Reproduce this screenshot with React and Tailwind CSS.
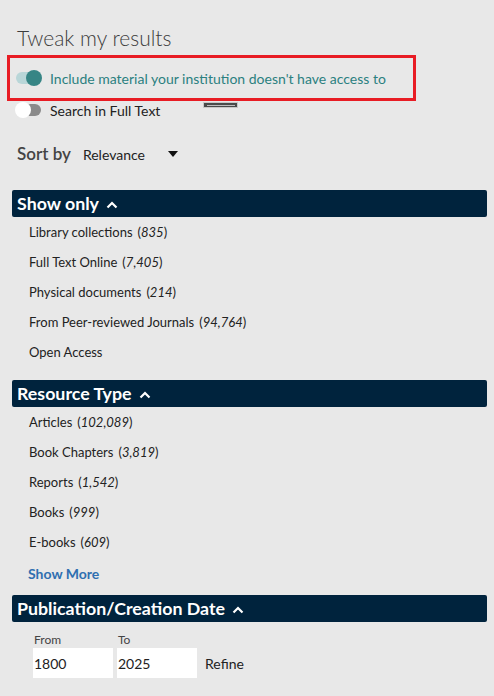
import React from 'react';

const font = { fontFamily: 'Lato, "Open Sans", sans-serif' };

function Toggle({ on }) {
  return (
    <span className="relative inline-flex h-[14px] w-[26px] items-center shrink-0">
      <span className={`h-[12px] w-[25px] rounded-full ${on ? 'bg-[#b9d6d8]' : 'bg-[#8a8a8a]'}`} />
      <span
        className={`absolute top-[-1px] h-[16px] w-[16px] rounded-full ${
          on ? 'left-[10px] bg-[#368585]' : 'left-[-1px] bg-white'
        }`}
      />
    </span>
  );
}

function Chevron() {
  return (
    <svg width="12" height="8" viewBox="0 0 12 8" className="ml-[7px] mt-[2px]">
      <path d="M1.5 6.5 L6 2 L10.5 6.5" fill="none" stroke="white" strokeWidth="2.2" />
    </svg>
  );
}

function Header({ children }) {
  return (
    <div className="ml-[12px] mr-[7px] flex h-[27px] items-center rounded-[2px] bg-[#00233d] pl-[5px] text-[17.8px] font-bold text-white">
      {children}
      <Chevron />
    </div>
  );
}

function Facet({ label, count }) {
  return (
    <div className="flex h-[30px] items-center pl-[29px] text-[13px] text-[#222]">
      <span>{label}</span>
      {count && (
        <span className="ml-[5px]">
          (<span className="italic">{count}</span>)
        </span>
      )}
    </div>
  );
}

export default function App() {
  const showOnly = [
    ['Library collections', '835'],
    ['Full Text Online', '7,405'],
    ['Physical documents', '214'],
    ['From Peer-reviewed Journals', '94,764'],
    ['Open Access', null],
  ];
  const types = [
    ['Articles', '102,089'],
    ['Book Chapters', '3,819'],
    ['Reports', '1,542'],
    ['Books', '999'],
    ['E-books', '609'],
  ];

  return (
    <div className="h-[696px] w-[494px] overflow-hidden bg-[#e8e8e8]" style={font}>
      <div className="pl-[17px] pt-[25px] text-[21px] font-light leading-[26px] text-[#3c3c3c]">Tweak my results</div>

      <div className="ml-[7px] mt-[4px] flex h-[46px] w-[409px] items-center border-[3px] border-[#e81c24] pl-[6px]">
        <Toggle on />
        <span className="ml-[8px] text-[14px] text-[#2b8080]">Include material your institution doesn't have access to</span>
      </div>

      <div className="relative flex h-[20px] items-center pl-[16px] -mt-[1px]">
        <Toggle />
        <span className="ml-[8px] text-[14px] text-[#222]">Search in Full Text</span>
        <span className="absolute left-[204px] top-[3px] flex h-[4px] w-[33px] items-center justify-center bg-[#4a4a4a] ring-1 ring-[#c8c8c8]">
          <span className="h-[1px] w-[28px] bg-[#bdbdbd]" />
        </span>
      </div>

      <div className="mt-[22px] flex h-[24px] items-center pl-[17px]">
        <span className="text-[17px] font-semibold text-[#444]">Sort by</span>
        <span className="ml-[12px] text-[14px] text-[#222]">Relevance</span>
        <svg width="10" height="6" viewBox="0 0 10 6" className="ml-[23px]">
          <path d="M0 0 L10 0 L5 6 Z" fill="#111" />
        </svg>
      </div>

      <div className="mt-[24px]">
        <Header>Show only</Header>
        <div className="pt-[1px]">
          {showOnly.map(([l, c]) => (
            <Facet key={l} label={l} count={c} />
          ))}
        </div>
      </div>

      <div className="mt-[12px]">
        <Header>Resource Type</Header>
        <div className="pt-[1px]">
          {types.map(([l, c]) => (
            <Facet key={l} label={l} count={c} />
          ))}
          <div className="flex h-[30px] items-center pl-[28px] text-[14px] font-bold text-[#2f6fb0]">Show More</div>
        </div>
      </div>

      <div className="mt-[7px]">
        <Header>Publication/Creation Date</Header>
        <div className="flex items-end pl-[33px] pt-[11px]">
          <label className="flex w-[80px] flex-col">
            <span className="pl-[1px] text-[12px] leading-[14px] text-[#444]">From</span>
            <span className="mt-[1px] flex h-[30px] items-center bg-white pl-[1px] text-[14px] text-[#222]">1800</span>
          </label>
          <label className="ml-[4px] flex w-[80px] flex-col">
            <span className="pl-[1px] text-[12px] leading-[14px] text-[#444]">To</span>
            <span className="mt-[1px] flex h-[30px] items-center bg-white pl-[1px] text-[14px] text-[#222]">2025</span>
          </label>
          <span className="ml-[8px] flex h-[30px] items-center text-[14px] text-[#222]">Refine</span>
        </div>
      </div>
    </div>
  );
}
